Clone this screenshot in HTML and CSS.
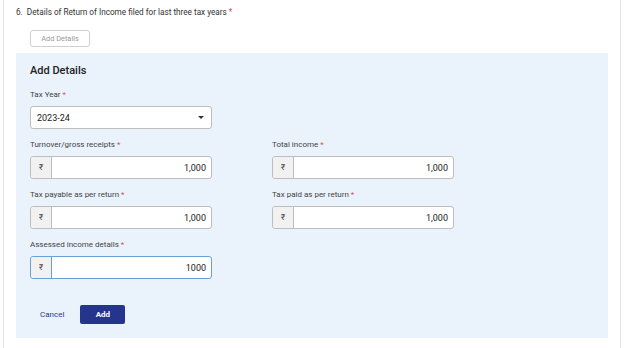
FILE: index.html
```html
<!DOCTYPE html>
<html lang="en">
<head>
    <meta charset="UTF-8">
    <meta name="viewport" content="width=device-width, initial-scale=1.0">
    <title>Details of Return of Income</title>
    <link rel="stylesheet" href="styles.css">
</head>
<body>
    <div class="card">
        <p class="question">6.&nbsp; Details of Return of Income filed for last three tax years <span class="req">*</span></p>
        <button class="btn-outline">Add Details</button>

        <div class="panel">
            <h3>Add Details</h3>

            <div class="fields">
                <div class="field">
                    <label>Tax Year <span class="req">*</span></label>
                    <div class="select">
                        <span>2023-24</span>
                        <span class="caret"></span>
                    </div>
                </div>
                <div class="field"></div>

                <div class="field">
                    <label>Turnover/gross receipts <span class="req">*</span></label>
                    <div class="amount">
                        <span class="prefix">₹</span>
                        <span class="value">1,000</span>
                    </div>
                </div>
                <div class="field">
                    <label>Total income <span class="req">*</span></label>
                    <div class="amount">
                        <span class="prefix">₹</span>
                        <span class="value">1,000</span>
                    </div>
                </div>

                <div class="field">
                    <label>Tax payable as per return <span class="req">*</span></label>
                    <div class="amount">
                        <span class="prefix">₹</span>
                        <span class="value">1,000</span>
                    </div>
                </div>
                <div class="field">
                    <label>Tax paid as per return <span class="req">*</span></label>
                    <div class="amount">
                        <span class="prefix">₹</span>
                        <span class="value">1,000</span>
                    </div>
                </div>

                <div class="field">
                    <label>Assessed income details <span class="req">*</span></label>
                    <div class="amount focused">
                        <span class="prefix">₹</span>
                        <span class="value">1000</span>
                    </div>
                </div>
            </div>

            <div class="actions">
                <button class="btn-link">Cancel</button>
                <button class="btn-primary">Add</button>
            </div>
        </div>
    </div>
</body>
</html>
```

FILE: styles.css
```css
body {
    margin: 0;
    font-family: Roboto, "Liberation Sans", sans-serif;
    color: #333;
    background-color: #fff;
}

.card {
    margin: 0 3px;
    min-height: 348px;
    box-sizing: border-box;
    border-left: 1px solid #e4e4ee;
    border-right: 1px solid #e4e4ee;
    padding: 6px 0 0 12px;
}

.question {
    margin: 0;
    font-size: 8.2px;
    line-height: 12px;
    color: #333;
}

.req {
    color: #d9534f;
}

.btn-outline {
    display: block;
    margin: 12px 0 6px 14px;
    width: 60px;
    height: 17px;
    padding: 0;
    font-family: inherit;
    font-size: 7.4px;
    color: #9a9a9a;
    background-color: #fff;
    border: 1px solid #cfcfcf;
    border-radius: 3px;
}

.panel {
    width: 592px;
    box-sizing: border-box;
    background-color: #eaf2fc;
    padding: 11px 14px 14px 14px;
}

.panel h3 {
    margin: 0 0 12px 0;
    font-size: 11px;
    line-height: 14px;
    font-weight: 500;
    color: #222;
}

.fields {
    display: grid;
    grid-template-columns: 182px 182px;
    column-gap: 60px;
    row-gap: 11px;
}

.field label {
    display: block;
    font-size: 8px;
    line-height: 10px;
    color: #444;
    margin-bottom: 6px;
}

.select,
.amount {
    display: flex;
    align-items: center;
    height: 23px;
    box-sizing: border-box;
    background-color: #fff;
    border: 1px solid #bdbdbd;
    border-radius: 3px;
    font-size: 9px;
    color: #222;
}

.select {
    justify-content: space-between;
    padding: 0 7px 0 6px;
}

.caret {
    width: 0;
    height: 0;
    border-left: 3px solid transparent;
    border-right: 3px solid transparent;
    border-top: 3px solid #333;
}

.prefix {
    width: 20px;
    height: 100%;
    display: flex;
    align-items: center;
    justify-content: center;
    background-color: #f1f1f1;
    border-right: 1px solid #bdbdbd;
    border-radius: 3px 0 0 3px;
    font-size: 8px;
    color: #444;
}

.value {
    flex: 1;
    text-align: right;
    padding-right: 5px;
}

.amount.focused {
    border-color: #6a9fd8;
}

.amount.focused .prefix {
    border-right-color: #6a9fd8;
}

.actions {
    display: flex;
    align-items: center;
    margin-top: 26px;
}

.btn-link {
    font-family: inherit;
    font-size: 8px;
    color: #2b3a8c;
    background: none;
    border: none;
    padding: 0;
    margin: 0 16px 0 10px;
}

.btn-primary {
    width: 45px;
    height: 19px;
    padding: 0;
    font-family: inherit;
    font-size: 8px;
    font-weight: 700;
    color: #fff;
    background-color: #26358c;
    border: none;
    border-radius: 2px;
}
```
